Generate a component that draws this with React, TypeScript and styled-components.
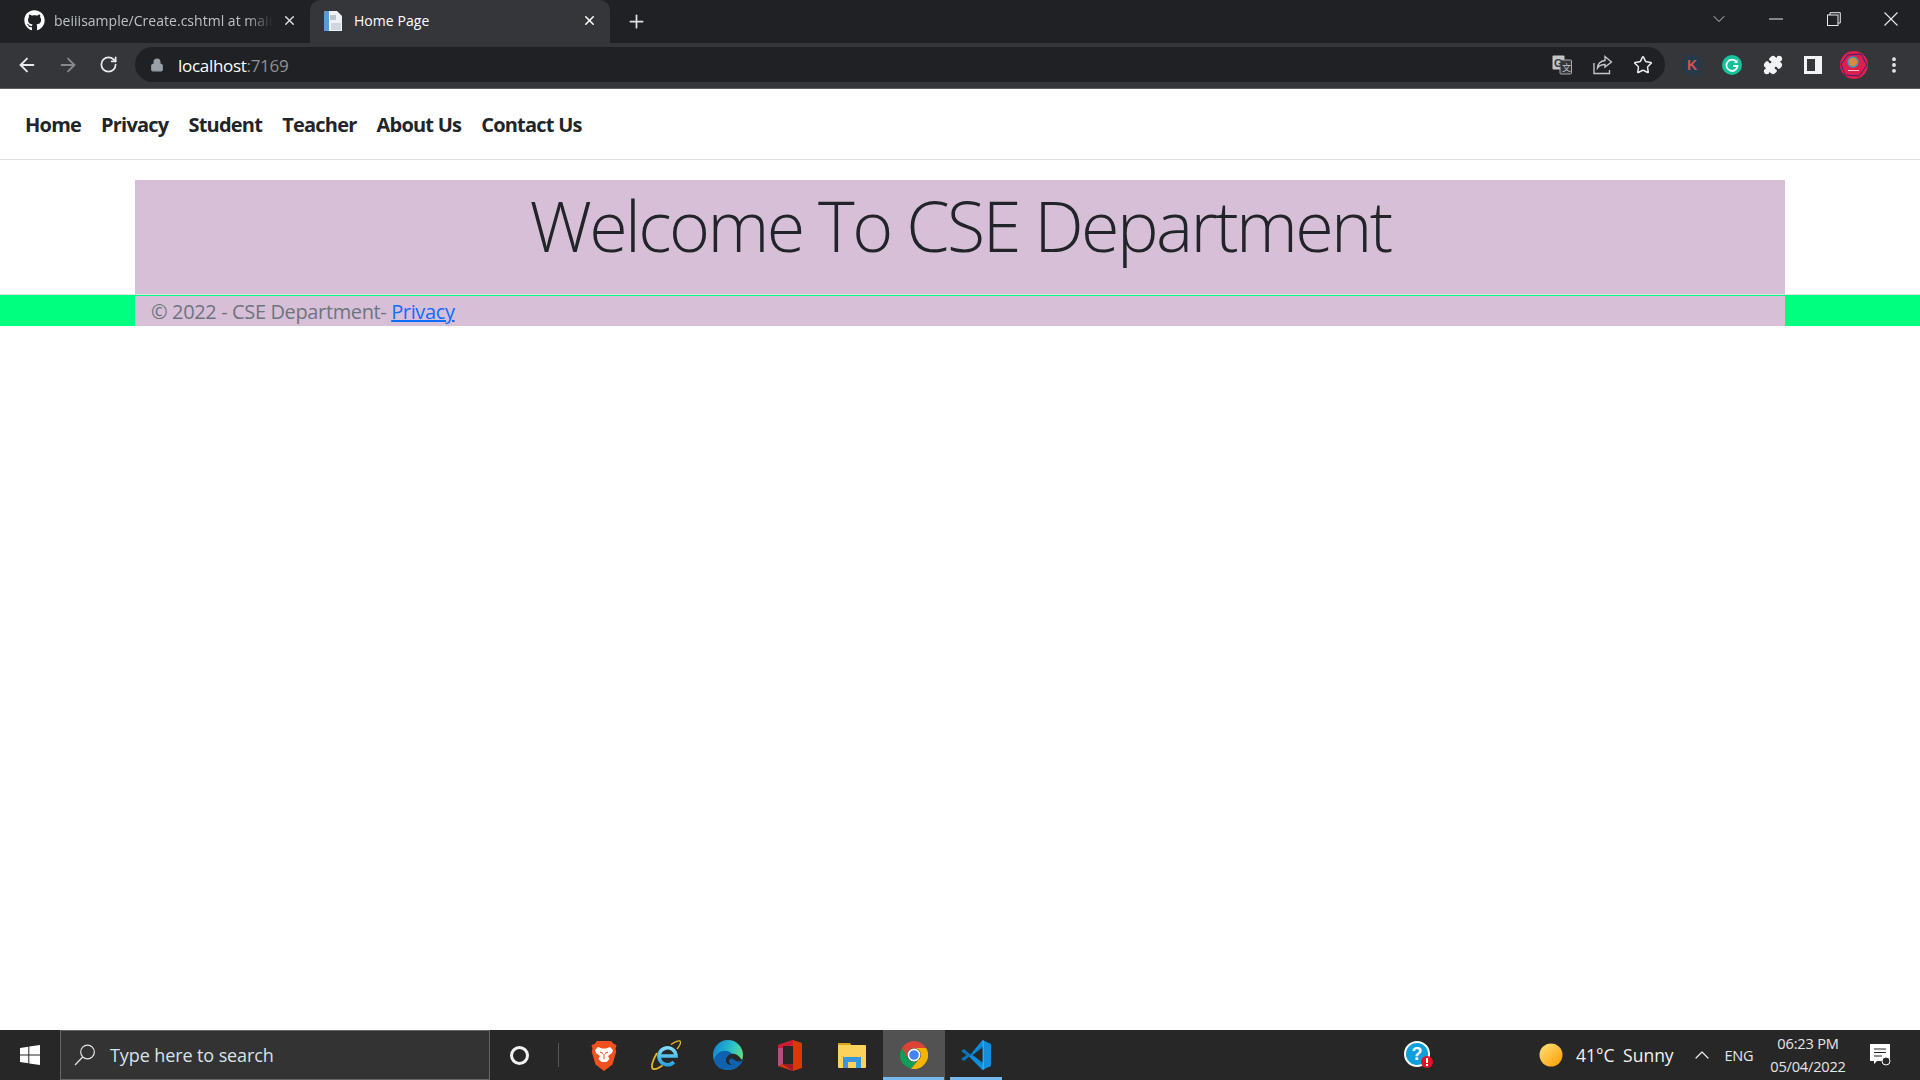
import React from "react";
import styled, { createGlobalStyle } from "styled-components";
import { FaGithub } from "react-icons/fa";
import { ArrowLeft, ArrowRight, RotateCw, Lock, Plus, X, Star, EllipsisVertical, Puzzle, ChevronUp, ChevronDown } from "lucide-react";

const Global = createGlobalStyle`
  html, body { margin: 0; padding: 0; height: 100%; background: #fff; overflow: hidden; }
  #root { height: 100%; }
  * { box-sizing: border-box; }
`;

const Screen = styled.div`
  height: 1080px;
  width: 1920px;
  display: flex;
  flex-direction: column;
  font-family: "Open Sans", "Noto Sans", sans-serif;
`;

/* ---------- browser chrome ---------- */
const TabStrip = styled.div`
  height: 43px;
  background: #202124;
  display: flex;
  align-items: stretch;
  color: #fff;
  flex: none;
`;
const Tab = styled.div<{ $active?: boolean; $w: number }>`
  width: ${(p) => p.$w}px;
  height: 43px;
  display: flex;
  align-items: center;
  gap: ${(p) => (p.$active ? 11 : 9)}px;
  padding: 0 13px 2px ${(p) => (p.$active ? 13 : 24)}px;
  background: ${(p) => (p.$active ? "#35363a" : "transparent")};
  border-radius: ${(p) => (p.$active ? "10px 10px 0 0" : "0")};
  flex: none;
`;
const TabTitle = styled.span<{ $active?: boolean; $fade?: boolean }>`
  flex: 1;
  font-family: "Open Sans", sans-serif;
  font-size: 14px;
  letter-spacing: ${(p) => (p.$active ? "0.05px" : "0.02px")};
  color: ${(p) => (p.$active ? "#ffffff" : "#bdc1c6")};
  white-space: nowrap;
  overflow: hidden;
  mask-image: ${(p) => (p.$fade ? "linear-gradient(90deg, #000 88%, transparent 100%)" : "none")};
`;
const NewTab = styled.div`
  width: 52px;
  display: flex;
  align-items: center;
  justify-content: center;
  color: #dee1e6;
  padding-bottom: 1px;
`;
const StripSpacer = styled.div`
  flex: 1;
`;
const WindowButton = styled.div`
  width: 57.5px;
  display: flex;
  align-items: center;
  justify-content: center;
  color: #e8eaed;
  padding-bottom: 5px;
`;
const Toolbar = styled.div`
  height: 46px;
  background: #35363a;
  border-bottom: 1px solid #5f6063;
  display: flex;
  align-items: center;
  padding: 0 8px 2px 7px;
  flex: none;
`;
const ToolButton = styled.div<{ $dim?: boolean }>`
  width: 40.5px;
  height: 32px;
  display: flex;
  align-items: center;
  justify-content: center;
  color: ${(p) => (p.$dim ? "#86888c" : "#e8eaed")};
  flex: none;
`;
const Omnibox = styled.div`
  width: 1530px;
  height: 35px;
  margin-left: 6px;
  margin-right: 7px;
  border-radius: 18px;
  background: #202124;
  display: flex;
  align-items: center;
  padding: 0 1px 0 15px;
  color: #9aa0a6;
  flex: none;
`;
const UrlText = styled.span`
  margin-left: 14.5px;
  padding-top: 1px;
  font-family: "Open Sans", sans-serif;
  font-size: 17px;
  letter-spacing: -0.3px;
  color: #fff;
  flex: 1;
`;
const UrlPort = styled.span`
  color: #8f9296;
`;

/* ---------- page ---------- */
const Page = styled.div`
  flex: 1;
  min-height: 0;
  background: #fff;
  display: flex;
  flex-direction: column;
`;
const NavBar = styled.nav`
  height: 71px;
  border-bottom: 1px solid #dfe1e3;
  display: flex;
  align-items: center;
  gap: 20px;
  padding: 0 25px;
  margin-bottom: 20px;
  flex: none;
`;
const NavLink = styled.a`
  font-family: "Open Sans", sans-serif;
  font-size: 20px;
  font-weight: 700;
  letter-spacing: -0.78px;
  color: #212529;
`;
const Main = styled.main`
  width: 1650px;
  height: 114px;
  margin: 0 auto;
  background: #d8bfd8;
  display: flex;
  justify-content: center;
  flex: none;
`;
const Title = styled.h1`
  margin: 0;
  font-family: "Open Sans", sans-serif;
  font-size: 70px;
  font-weight: 300;
  line-height: 90px;
  letter-spacing: -2.6px;
  color: #212529;
`;
const Footer = styled.footer`
  height: 32px;
  border-top: 1px solid #dee2e6;
  background: #00ff7f;
  flex: none;
`;
const FooterInner = styled.div`
  width: 1650px;
  height: 30px;
  margin: 1px auto 0;
  background: #d8bfd8;
  padding: 1px 0 0 16px;
  font-family: "Open Sans", sans-serif;
  font-size: 20px;
  line-height: 29px;
  letter-spacing: -0.37px;
  color: #6c757d;
`;
const FooterLink = styled.a`
  color: #0d6efd;
  text-decoration: underline;
`;

/* ---------- taskbar ---------- */
const Taskbar = styled.div`
  height: 50px;
  background: #272727;
  display: flex;
  align-items: stretch;
  flex: none;
  color: #fff;
`;
const StartCell = styled.div`
  width: 60px;
  display: flex;
  align-items: center;
  justify-content: center;
`;
const SearchBox = styled.div`
  width: 430px;
  background: #333333;
  border: 1px solid #666666;
  display: flex;
  align-items: center;
  padding-left: 13px;
  gap: 14px;
`;
const SearchText = styled.span`
  font-family: "Open Sans", sans-serif;
  font-size: 18px;
  letter-spacing: -0.1px;
  color: #d8e2ea;
`;
const CortanaCell = styled.div`
  width: 58px;
  display: flex;
  align-items: center;
  justify-content: center;
`;
const Ring = styled.div`
  width: 19px;
  height: 19px;
  border: 3px solid #f2f2f2;
  border-radius: 50%;
`;
const Divider = styled.div`
  width: 1px;
  height: 24px;
  background: #555;
  align-self: center;
  margin: 0 14px 0 10px;
`;
const AppCell = styled.div<{ $hover?: boolean; $run?: boolean }>`
  width: 62px;
  flex: none;
  display: flex;
  align-items: center;
  justify-content: center;
  position: relative;
  background: ${(p) => (p.$hover ? "#525252" : "transparent")};
  &::after {
    content: "";
    position: absolute;
    left: ${(p) => (p.$hover ? 0 : 5)}px;
    right: ${(p) => (p.$hover ? 1 : 5)}px;
    bottom: 0;
    height: 3px;
    background: ${(p) => (p.$run ? "#76b9ed" : "transparent")};
  }
`;
const Tray = styled.div`
  flex: 1;
  display: flex;
  align-items: center;
  padding-left: 397px;
`;
const TraySpacer = styled.div`
  width: 105px;
`;
const WeatherText = styled.span`
  margin-left: 13px;
  width: 99.5px;
  font-family: "Open Sans", sans-serif;
  font-size: 17.5px;
  word-spacing: 4px;
  white-space: nowrap;
  color: #f2f2f2;
`;
const TrayGlyph = styled.div`
  width: 32px;
  display: flex;
  justify-content: center;
  margin-left: 10px;
  color: #eee;
`;
const Lang = styled.span`
  margin-left: 7px;
  width: 36px;
  font-family: "Open Sans", sans-serif;
  font-size: 14.5px;
  letter-spacing: -0.2px;
  color: #e6e6e6;
`;
const Clock = styled.div`
  margin-left: 2.5px;
  width: 90px;
  padding-bottom: 1px;
  text-align: center;
  font-family: "Open Sans", sans-serif;
  font-size: 14.6px;
  line-height: 22.5px;
  letter-spacing: -0.2px;
  color: #e6e6e6;
`;
const NotifySlot = styled.div`
  margin-left: 8px;
  width: 40px;
  display: flex;
  justify-content: center;
`;

/* ---------- drawn icons ---------- */
const PageFavicon = () => (
  <svg width="20" height="22" viewBox="0 0 20 22">
    <path d="M1 1h13l5 5v15H1z" fill="#eef1f5" />
    <rect x="1" y="1" width="5" height="20" fill="#5a9bd5" />
    <rect x="7" y="5" width="6" height="5" fill="#b9c4d0" />
    <rect x="8" y="13" width="10" height="7" fill="#cfd6de" />
  </svg>
);
const MinimizeIcon = () => (
  <svg width="14" height="2" viewBox="0 0 14 2">
    <rect width="14" height="1" y="0.5" fill="#e8eaed" />
  </svg>
);
const Restore = () => (
  <svg width="14" height="14" viewBox="0 0 14 14" fill="none" stroke="#e8eaed" strokeWidth="1">
    <rect x="0.5" y="3" width="10.5" height="10.5" />
    <path d="M3 3V0.700h10.300V11H11" />
  </svg>
);
const CloseThin = () => (
  <svg width="14" height="14" viewBox="0 0 14 14" stroke="#e8eaed" strokeWidth="1.100">
    <path d="M0.500 0.500l13 13M13.500 0.500l-13 13" />
  </svg>
);
const TranslateIcon = () => (
  <svg width="20" height="20" viewBox="0 0 20 20">
    <rect x="0.500" y="0.500" width="12" height="14" rx="1" fill="#c4c5c7" />
    <rect x="8" y="5" width="11.500" height="14" rx="1" fill="#35363a" stroke="#a9abae" />
    <text x="2" y="11.500" fontSize="11" fontWeight="700" fontFamily="Liberation Sans" fill="#35363a">G</text>
    <text x="10" y="15.500" fontSize="9" fontFamily="Noto Sans CJK SC" fill="#c4c5c7">文</text>
  </svg>
);
const ShareIcon = () => (
  <svg width="20" height="20" viewBox="0 0 20 20" fill="none" stroke="#c4c5c7" strokeWidth="1.400">
    <path d="M1 8v10.500h15.500V15" />
    <path d="M12 1.500l6.500 5.500-6.500 5V9.500c-3.500 0-5.800 1-7.500 3.500 .4-4.500 3-7 7.500-7.500z" />
  </svg>
);
const PanelIcon = () => (
  <svg width="18" height="18" viewBox="0 0 18 18">
    <rect width="18" height="18" fill="#f1f3f4" />
    <rect x="3" y="3" width="8" height="12" fill="#35363a" />
  </svg>
);
const KExt = () => (
  <svg width="20" height="20" viewBox="0 0 20 20">
    <circle cx="10" cy="10" r="10" fill="#253a4d" />
    <text x="10" y="15" textAnchor="middle" fontSize="14" fontWeight="700" fontFamily="Liberation Sans" fill="#d9534f">K</text>
  </svg>
);
const GrammarlyIcon = () => (
  <svg width="20" height="20" viewBox="0 0 20 20">
    <circle cx="10" cy="10" r="10" fill="#15c39a" />
    <path d="M14.600 7A5.600 5.600 0 1 0 15.600 11H11" fill="none" stroke="#fff" strokeWidth="1.800" />
    <path d="M15.500 4.500v3.500H12" fill="#fff" />
  </svg>
);
const Avatar = () => (
  <svg width="28" height="28" viewBox="0 0 28 28">
    <circle cx="14" cy="14" r="14" fill="#dc1f4c" />
    <path d="M8 4l13-1 6 11-8 11-14-1-4-11z" fill="none" stroke="#3a2079" strokeWidth="1" />
    <circle cx="13" cy="11" r="5" fill="#d98a3d" stroke="#2f9ec4" strokeWidth="1.400" />
    <rect x="8" y="19" width="11" height="1" fill="#f3c7cf" />
  </svg>
);
const WindowsLogo = () => (
  <svg width="20" height="20" viewBox="0 0 20 20" fill="#fff">
    <path d="M0 3l8.300-1.200v7.700H0zM9.300 1.600L20 0v9.500H9.300zM0 10.500h8.300v7.700L0 17zM9.300 10.500H20V20L9.300 18.400z" />
  </svg>
);
const SearchGlyph = () => (
  <svg width="22" height="22" viewBox="0 0 22 22" fill="none" stroke="#e6e6e6" strokeWidth="1.200">
    <circle cx="13.500" cy="8" r="6.800" />
    <path d="M8.700 13L1 21" />
  </svg>
);
const BraveIcon = () => (
  <svg width="26" height="31" viewBox="0 0 26 31">
    <path d="M6 1h14l3 3 2.500 1-1 4 .8 2.500-3.800 13L13 31l-8.500-6.500-3.800-13L1.500 9 .5 5l3-1z" fill="#f1501f" />
    <path d="M7 7l4 1.500h4L19 7l3 3-1 3-4 3 1.500 3-3 3h-5l-3-3L9 16l-4-3-1-3z" fill="#fff" />
    <path d="M9 12l3 1.500M17 12l-3 1.500M13 14v5" stroke="#f1501f" strokeWidth="1.100" />
  </svg>
);
const IEIcon = () => (
  <svg width="30" height="30" viewBox="0 0 30 30" fill="none">
    <defs>
      <linearGradient id="ieG" x1="0" y1="0" x2="0" y2="1">
        <stop offset="0" stopColor="#7fdcf7" />
        <stop offset="1" stopColor="#2aa5e3" />
      </linearGradient>
    </defs>
    <path d="M8 16h17a8.500 8.500 0 1 0-2.200 6" stroke="url(#ieG)" strokeWidth="3.600" />
    <path d="M20 4.500C25 1 29 0 29.500 1.800 30 3.500 28 6.500 26 9" stroke="#e3b62a" strokeWidth="1.400" />
    <path d="M6 13C2 20 0 26 1.500 28.500c1.500 1.500 5.500 0 10-3" stroke="#e3b62a" strokeWidth="1.800" />
  </svg>
);
const EdgeIcon = () => (
  <svg width="30" height="30" viewBox="0 0 30 30">
    <defs>
      <linearGradient id="edgeG" x1="0" y1="0.300" x2="1" y2="0.700">
        <stop offset="0" stopColor="#1287d0" />
        <stop offset="0.550" stopColor="#2cc3c8" />
        <stop offset="1" stopColor="#6fe36e" />
      </linearGradient>
    </defs>
    <circle cx="15" cy="15" r="15" fill="url(#edgeG)" />
    <path d="M1 20C3 12 11 9 17 12c3 2 5 5 5 7h8c-1 6-7 11-15 11S2 26 1 20z" fill="#0e62ae" />
    <path d="M13 21c0-5 4-8 9-7 3 1 6 4 7 7-3 1-6 .5-8-1.500-3-2-5-1-5 1.500 0 1.500 1 3 3 4-4 0-6-2-6-4z" fill="#272727" />
  </svg>
);
const OfficeIcon = () => (
  <svg width="24" height="31" viewBox="0 0 24 31">
    <path d="M15 0l9 3v25l-9 3L0 26V5z" fill="#d83b01" />
    <path d="M15 0L0 5v21l5-2V8l10-3z" fill="#c81e34" />
    <path d="M0 8l5 0v16l-5 2z" fill="#b0527f" />
    <rect x="5" y="6" width="10" height="18.500" fill="#272727" />
    <path d="M5 24.500h10V31z" fill="#a5162b" />
  </svg>
);
const FolderIcon = () => (
  <svg width="28" height="26" viewBox="0 0 28 26">
    <path d="M0 1h12l2 3H0z" fill="#d9a21b" />
    <rect y="3" width="28" height="23" rx="1" fill="#fbd25c" />
    <path d="M5 26V15h18v11h-5v-6h-8v6z" fill="#3a96dd" />
  </svg>
);
const ChromeIcon = () => (
  <svg width="28" height="28" viewBox="-14 -14 28 28">
    <path d="M-12.120-7A14 14 0 0 1 12.120-7H0A7 7 0 0 0-6.060 3.500z" fill="#db4437" />
    <path d="M-12.120-7L-6.060 3.500A7 7 0 0 0 3.500 6.060L-3 13.700A14 14 0 0 1-12.120-7z" fill="#0f9d58" />
    <path d="M12.120-7A14 14 0 0 1-3 13.700L3.500 6.060A7 7 0 0 0 6.060-3.500 7 7 0 0 0 0-7z" fill="#f4b400" />
    <circle r="5.600" fill="#4285f4" stroke="#fff" strokeWidth="1.600" />
  </svg>
);
const VSCodeIcon = () => (
  <svg width="30" height="30" viewBox="0 0 30 30">
    <path d="M21.500 0L30 4v22l-8.500 4L8 16.500z" fill="#0f8fdc" />
    <path d="M21.500 0L21.500 30 23 29.300V1z" fill="#2cabf0" />
    <path d="M21.500 7.500L11.500 15l10 7.500z" fill="#272727" />
    <path d="M3 9L0 11l5.500 4L0 19l3 2 18.500-15.500V7.500L9 15l12.500 8.500v1L3 9z" fill="#0a74bd" />
  </svg>
);
const HelpIcon = () => (
  <svg width="30" height="30" viewBox="0 0 30 30">
    <circle cx="13" cy="14" r="12" fill="#0f9fdc" stroke="#fff" strokeWidth="2" />
    <text x="13" y="20" textAnchor="middle" fontSize="18" fontWeight="700" fontFamily="Liberation Sans" fill="#fff">?</text>
    <circle cx="23" cy="22" r="6" fill="#e81123" />
    <rect x="22" y="18" width="2" height="5" fill="#fff" />
    <rect x="22" y="24" width="2" height="2" fill="#fff" />
  </svg>
);
const SunIcon = () => (
  <svg width="24" height="24" viewBox="0 0 24 24">
    <defs>
      <linearGradient id="sunG" x1="0" y1="0" x2="1" y2="1">
        <stop offset="0" stopColor="#ffe27a" />
        <stop offset="1" stopColor="#ff9a00" />
      </linearGradient>
    </defs>
    <circle cx="12" cy="12" r="11.500" fill="url(#sunG)" />
  </svg>
);
const NotifyIcon = () => (
  <svg width="22" height="22" viewBox="0 0 22 22">
    <path d="M0 0h20v17H7l-3 3v-3H0z" fill="#fff" />
    <path d="M4 5h12M4 8.500h12M4 12h8" stroke="#272727" strokeWidth="1.200" />
    <circle cx="16" cy="17" r="4" fill="#272727" stroke="#fff" strokeWidth="1" />
  </svg>
);

const navItems = ["Home", "Privacy", "Student", "Teacher", "About Us", "Contact Us"];

export default function App() {
  return (
    <>
      <Global />
      <Screen>
        <TabStrip>
          <Tab $w={310}>
            <FaGithub size={21} color="#fff" />
            <TabTitle $fade>beiiisample/Create.cshtml at main</TabTitle>
            <X size={15} color="#dadce0" strokeWidth={2.4} />
          </Tab>
          <Tab $active $w={300}>
            <PageFavicon />
            <TabTitle $active>Home Page</TabTitle>
            <X size={15} color="#fff" strokeWidth={2.4} />
          </Tab>
          <NewTab>
            <Plus size={21} strokeWidth={2} />
          </NewTab>
          <StripSpacer />
          <WindowButton><ChevronDown size={20} strokeWidth={1} /></WindowButton>
          <WindowButton><MinimizeIcon /></WindowButton>
          <WindowButton><Restore /></WindowButton>
          <WindowButton><CloseThin /></WindowButton>
        </TabStrip>
        <Toolbar>
          <ToolButton><ArrowLeft size={22} strokeWidth={2} /></ToolButton>
          <ToolButton $dim><ArrowRight size={22} strokeWidth={2} /></ToolButton>
          <ToolButton><RotateCw size={19} strokeWidth={2.2} /></ToolButton>
          <Omnibox>
            <Lock size={14} fill="#9aa0a6" strokeWidth={2} />
            <UrlText>localhost<UrlPort>:7169</UrlPort></UrlText>
            <ToolButton><TranslateIcon /></ToolButton>
            <ToolButton><ShareIcon /></ToolButton>
            <ToolButton><Star size={20} strokeWidth={1.8} /></ToolButton>
          </Omnibox>
          <ToolButton><KExt /></ToolButton>
          <ToolButton><GrammarlyIcon /></ToolButton>
          <ToolButton><Puzzle size={20} fill="#f1f3f4" color="#f1f3f4" /></ToolButton>
          <ToolButton><PanelIcon /></ToolButton>
          <ToolButton><Avatar /></ToolButton>
          <ToolButton><EllipsisVertical size={20} strokeWidth={2.6} /></ToolButton>
        </Toolbar>
        <Page>
          <NavBar>
            {navItems.map((n) => <NavLink key={n}>{n}</NavLink>)}
          </NavBar>
          <Main>
            <Title>Welcome To CSE Department</Title>
          </Main>
          <Footer>
            <FooterInner>
              © 2022 - CSE Department- <FooterLink>Privacy</FooterLink>
            </FooterInner>
          </Footer>
        </Page>
        <Taskbar>
          <StartCell><WindowsLogo /></StartCell>
          <SearchBox>
            <SearchGlyph />
            <SearchText>Type here to search</SearchText>
          </SearchBox>
          <CortanaCell><Ring /></CortanaCell>
          <Divider />
          <AppCell><BraveIcon /></AppCell>
          <AppCell><IEIcon /></AppCell>
          <AppCell><EdgeIcon /></AppCell>
          <AppCell><OfficeIcon /></AppCell>
          <AppCell><FolderIcon /></AppCell>
          <AppCell $hover $run><ChromeIcon /></AppCell>
          <AppCell $run><VSCodeIcon /></AppCell>
          <Tray>
            <HelpIcon />
            <TraySpacer />
            <SunIcon />
            <WeatherText>41°C Sunny</WeatherText>
            <TrayGlyph><ChevronUp size={24} strokeWidth={1.2} /></TrayGlyph>
            <Lang>ENG</Lang>
            <Clock>06:23 PM<br />05/04/2022</Clock>
            <NotifySlot><NotifyIcon /></NotifySlot>
          </Tray>
        </Taskbar>
      </Screen>
    </>
  );
}
